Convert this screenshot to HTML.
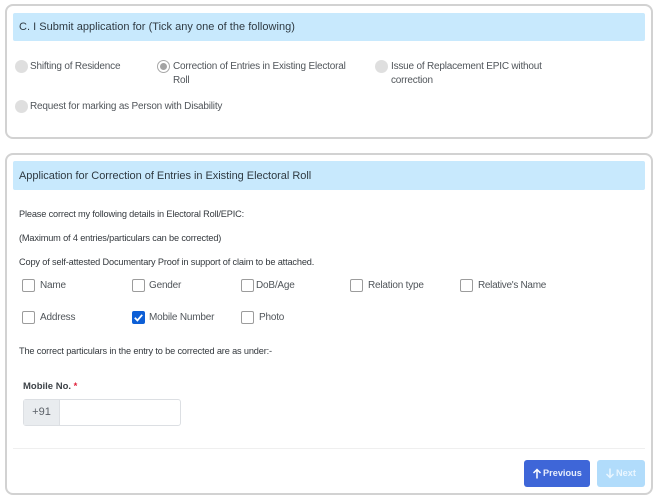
<!DOCTYPE html>
<html><head><meta charset="utf-8">
<style>
html,body{margin:0;padding:0;background:#fff}
body{width:655px;height:500px;position:relative;overflow:hidden;font-family:"Liberation Sans",sans-serif;color:#4a4f55}
.a{position:absolute;white-space:nowrap}
.card{position:absolute;left:5px;width:648px;border:2px solid #d2d2d2;border-radius:8px;box-sizing:border-box;background:#fff}
.hd{position:absolute;left:13px;width:632px;background:#c8e9fd;border-radius:2px;color:#2f3a42;font-size:11px;line-height:28px;padding-left:6px;box-sizing:border-box}
.t{font-size:10px;letter-spacing:-.2px;line-height:14px;color:#50555a}
.s{font-size:9.2px;letter-spacing:-.15px;line-height:14px;color:#33383d}
.r{position:absolute;width:13px;height:13px;border-radius:50%;background:#dfdfdf}
.c{position:absolute;width:13px;height:13px;box-sizing:border-box;border:1px solid #9c9c9c;border-radius:2px;background:#fff}
</style></head><body>
<div class="card" style="top:4px;height:135px"></div>
<div class="hd" style="top:13px;height:28px;line-height:29px;letter-spacing:.02px">C. I Submit application for (Tick any one of the following)</div>
<div class="r" style="left:15px;top:60px"></div><div class="a t" style="left:30px;top:60px">Shifting of Residence</div>
<div class="r" style="left:157px;top:60px;background:#fff;border:1px solid #a8a8a8;box-sizing:border-box"></div>
<div class="r" style="left:160px;top:63px;width:7px;height:7px;background:#a3a3a3"></div>
<div class="a t" style="left:173px;top:60px">Correction of Entries in Existing Electoral</div><div class="a t" style="left:173px;top:74px">Roll</div>
<div class="r" style="left:375px;top:60px"></div><div class="a t" style="left:391px;top:60px">Issue of Replacement EPIC without</div><div class="a t" style="left:391px;top:74px">correction</div>
<div class="r" style="left:15px;top:100px"></div><div class="a t" style="left:30px;top:100px">Request for marking as Person with Disability</div>

<div class="card" style="top:153px;height:342px"></div>
<div class="hd" style="top:161px;height:29px;line-height:30px;letter-spacing:-.03px">Application for Correction of Entries in Existing Electoral Roll</div>
<div class="a s" style="left:19px;top:207px">Please correct my following details in Electoral Roll/EPIC:</div>
<div class="a s" style="left:19px;top:231px">(Maximum of 4 entries/particulars can be corrected)</div>
<div class="a s" style="left:19px;top:255px">Copy of self-attested Documentary Proof in support of claim to be attached.</div>

<div class="c" style="left:22px;top:279px"></div><div class="a t" style="left:40px;top:279px">Name</div>
<div class="c" style="left:132px;top:279px"></div><div class="a t" style="left:149px;top:279px">Gender</div>
<div class="c" style="left:241px;top:279px"></div><div class="a t" style="left:256px;top:279px">DoB/Age</div>
<div class="c" style="left:350px;top:279px"></div><div class="a t" style="left:368px;top:279px">Relation type</div>
<div class="c" style="left:460px;top:279px"></div><div class="a t" style="left:478px;top:279px;letter-spacing:-.3px">Relative's Name</div>

<div class="c" style="left:22px;top:311px"></div><div class="a t" style="left:40px;top:311px">Address</div>
<div class="c" style="left:132px;top:311px;background:#0d5fd6;border-color:#0d5fd6"></div>
<svg class="a" style="left:132px;top:311px" width="13" height="13" viewBox="0 0 13 13"><path d="M2.8 6.8 L5.4 9.4 L10.2 3.8" fill="none" stroke="#fff" stroke-width="1.8"/></svg>
<div class="a t" style="left:149px;top:311px">Mobile Number</div>
<div class="c" style="left:241px;top:311px"></div><div class="a t" style="left:259px;top:311px">Photo</div>

<div class="a s" style="left:19px;top:344px">The correct particulars in the entry to be corrected are as under:-</div>
<div class="a" style="left:23px;top:380px;font-size:9.5px;line-height:14px;font-weight:bold;color:#3d4247">Mobile No. <span style="color:#e0203a">*</span></div>

<div class="a" style="left:23px;top:399px;width:158px;height:27px;border:1px solid #dcdfe3;border-radius:3px;box-sizing:border-box;background:#fff"></div>
<div class="a" style="left:24px;top:400px;width:35px;height:25px;background:#e9ecef;border-right:1px solid #dcdfe3;font-size:11px;line-height:25px;text-align:center;color:#5b6067">+91</div>

<div class="a" style="left:13px;top:448px;width:632px;height:1px;background:#efefef"></div>

<div class="a" style="left:524px;top:460px;width:66px;height:27px;background:#3e66d8;border-radius:3px;color:#e8eefc;font-size:9.2px;font-weight:bold;line-height:27px;padding-left:19px;box-sizing:border-box">Previous</div>
<svg class="a" style="left:532px;top:468px" width="10" height="11" viewBox="0 0 10 11"><path d="M5 10.5V1.5M1.5 5L5 1.5L8.5 5" fill="none" stroke="#fff" stroke-width="1.5"/></svg>
<div class="a" style="left:597px;top:460px;width:48px;height:27px;background:#b1dcfb;border-radius:3px;color:#eaf6ff;font-size:9.2px;font-weight:bold;line-height:27px;padding-left:19px;box-sizing:border-box">Next</div>
<svg class="a" style="left:605px;top:468px" width="10" height="11" viewBox="0 0 10 11"><path d="M5 .5V9.5M1.5 6L5 9.5L8.5 6" fill="none" stroke="#eaf6ff" stroke-width="1.5"/></svg>
</body></html>
